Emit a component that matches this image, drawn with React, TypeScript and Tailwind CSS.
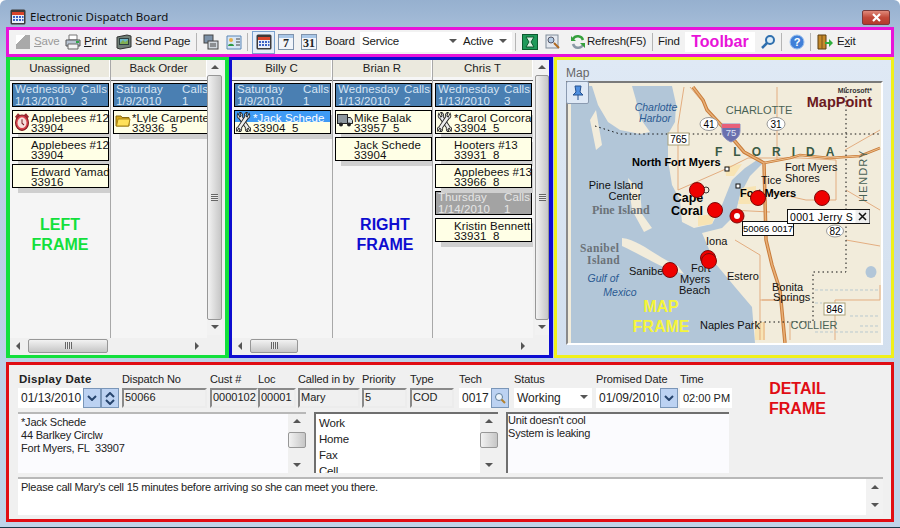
import type { ReactNode } from "react";

// Small hand drawn 16px icons used by the toolbar and the cards.
function Ico({ children, w = 16, h = 16, className = "" }: { children: ReactNode; w?: number; h?: number; className?: string }) {
  return (
    <svg width={w} height={h} viewBox="0 0 16 16" preserveAspectRatio="none" className={`shrink-0 ${className}`}>
      {children}
    </svg>
  );
}

const CalendarIcon = () => (
  <Ico>
    <rect x="0.5" y="0.5" width="15" height="15" rx="1.5" fill="#3d3a3a" />
    <rect x="2" y="3" width="12" height="3" fill="#d9442a" />
    <rect x="2" y="6" width="12" height="8" fill="#e9eef8" />
    <path d="M3 7h2v2H3zM6 7h2v2H6zM9 7h2v2H9zM12 7h1.500v2H12zM3 10h2v2H3zM6 10h2v2H6zM9 10h2v2H9zM12 10h1.500v2H12z" fill="#3d62c4" />
  </Ico>
);

const DayIcon = ({ label }: { label: string }) => (
  <span className="flex h-[16px] w-[16px] shrink-0 items-center justify-center border border-[#7f93ad] bg-[linear-gradient(#a9c7e8_0_3px,#f2f5fa_3px)] pt-[2px] font-['Liberation_Serif',serif] text-[12px] font-bold leading-none tracking-normal text-[#222]">
    {label}
  </span>
);

const PrintIcon = () => (
  <Ico>
    <path d="M4 1h8v5H4z" fill="#fff" stroke="#777" />
    <path d="M1 6h14v6H1z" fill="#b9c4d2" stroke="#555" />
    <path d="M3 10h10v5H3z" fill="#f4f4f4" stroke="#666" />
    <rect x="11" y="7" width="3" height="2" fill="#2fa84a" />
  </Ico>
);

const SendIcon = () => (
  <Ico>
    <path d="M1 3l10-2 4 1v11l-11 2-3-1z" fill="#6f7f76" stroke="#333" />
    <rect x="3.500" y="4.500" width="9" height="6" fill="#6cb7c9" stroke="#2d3f3f" />
    <path d="M4 9l3-3 2 2 3-2v4H4z" fill="#7fae52" />
  </Ico>
);

const WrenchIcon = () => (
  <Ico w={15} h={20}>
    <g fill="#ececec" stroke="#222" strokeWidth="0.9">
      <path d="M2 1L4 4 5.500 3 4 .5C6 0 7.500 2 7 4L14 12C15.500 12 16 14 15 15.500L13 13 11.500 14 13 15.700C11 16 9.500 15 10 12.500L3 5C1.500 5 .5 3 2 1Z" />
      <path d="M14 1L12 4 10.500 3 12 .5C10 0 8.500 2 9 4L2 12C.5 12 0 14 1 15.500L3 13 4.500 14 3 15.700C5 16 6.500 15 6 12.500L13 5C14.500 5 15.500 3 14 1Z" />
    </g>
  </Ico>
);

const TruckIcon = () => (
  <Ico>
    <rect x="0.500" y="2.500" width="10" height="9" fill="#8d979e" stroke="#222" />
    <path d="M10.500 5.500h3l2 3v3h-5z" fill="#c9d3d9" stroke="#222" />
    <circle cx="4" cy="12.500" r="2" fill="#222" />
    <circle cx="12" cy="12.500" r="2" fill="#222" />
  </Ico>
);

const FolderIcon = () => (
  <Ico>
    <path d="M1 4h5l1 1.500h7V14H1z" fill="#d9a91a" stroke="#8a6a10" />
    <path d="M1.500 14L3 7h12l-1.500 7z" fill="#ffe15a" stroke="#a98512" />
  </Ico>
);

const AlarmIcon = () => (
  <Ico h={19}>
    <circle cx="8" cy="9" r="6.500" fill="#d8404a" stroke="#7a1c22" />
    <circle cx="8" cy="9" r="4.500" fill="#f6dfdc" />
    <path d="M8 6v3.500l2 1.500" stroke="#7a1c22" fill="none" />
    <path d="M1 4l3-3 2 1.500-3.500 3zM15 4l-3-3-2 1.500 3.500 3z" fill="#9b2a30" />
  </Ico>
);

const Arrow = ({ dir }: { dir: "up" | "down" | "left" | "right" }) => {
  const d = { up: "M0 5L4 1 8 5z", down: "M0 1L8 1 4 5z", left: "M5 0L1 4 5 8z", right: "M1 0L5 4 1 8z" }[dir];
  return (
    <svg width="8" height="8" viewBox="0 0 8 8" className="shrink-0">
      <path d={d} fill="#555" />
    </svg>
  );
};

// Scrollbars, classic Windows look
function VScroll({ thumbTop = 0, thumbHeight, className = "" }: { thumbTop?: number; thumbHeight?: number; className?: string }) {
  return (
    <div className={`flex w-[15px] shrink-0 flex-col items-center bg-[#f2f2f2] ${className}`}>
      <div className="flex h-[15px] shrink-0 items-center justify-center"><Arrow dir="up" /></div>
      <div className="flex min-h-0 w-full flex-1 flex-col">
        <div style={{ height: thumbTop }} className="shrink-0" />
        <div
          style={thumbHeight ? { height: thumbHeight } : undefined}
          className={`flex items-center justify-center rounded-[2px] border border-[#979797] bg-[linear-gradient(90deg,#f2f2f2,#dcdcdc_50%,#c6c6c6)] ${thumbHeight ? "" : "flex-1"}`}
        >
          {!thumbHeight && <div className="h-[7px] w-[7px] bg-[repeating-linear-gradient(#666_0_1px,#e8e8e8_1px_2px)]" />}
        </div>
        {thumbHeight && <div className="flex-1" />}
      </div>
      <div className="flex h-[15px] shrink-0 items-center justify-center"><Arrow dir="down" /></div>
    </div>
  );
}

function HScroll({ width, thumb }: { width: number; thumb: number }) {
  return (
    <div style={{ width }} className="mb-[2px] flex h-[15px] shrink-0 items-center bg-[#f0f0f0]">
      <div className="flex w-[18px] shrink-0 justify-center"><Arrow dir="left" /></div>
      <div style={{ width: thumb }} className="flex h-[14px] shrink-0 items-center justify-center rounded-[2px] border border-[#979797] bg-[linear-gradient(#f2f2f2,#dcdcdc_50%,#c6c6c6)]">
        <div className="h-[7px] w-[7px] bg-[repeating-linear-gradient(90deg,#666_0_1px,#e8e8e8_1px_2px)]" />
      </div>
      <div className="flex-1" />
      <div className="flex w-[18px] shrink-0 justify-center"><Arrow dir="right" /></div>
    </div>
  );
}

// Board data
type Card = { kind: "card"; name: string; sub: string; icon?: ReactNode; selected?: boolean };
type Day = { kind: "day"; day: string; date: string; calls: string; grey?: boolean; label?: string };
type Entry = Card | Day;

function DayHead({ e }: { e: Day }) {
  return (
    <div className={`mb-[3px] grid h-[24px] w-[97px] shrink-0 grid-cols-[66px_60px] overflow-hidden border border-black pl-[2px] text-[11.500px] leading-[11.500px] tracking-[0.1px] ${e.grey ? "bg-[#a3a3a3] text-[#e6e6e6]" : "bg-[#4a7fb2] text-[#d6e4f2]"}`}>
      <span>{e.day}</span>
      <span>{e.label ?? "Calls:"}</span>
      <span>{e.date}</span>
      <span>{e.calls}</span>
    </div>
  );
}

function CardBox({ e }: { e: Card }) {
  return (
    <div className="relative mb-[3px] h-[24px] w-[97px] shrink-0 border border-black bg-[#ffffe6] text-[11.500px] leading-[10px] tracking-[0.1px] text-[#111] shadow-[6px_5px_0_#cfcfcf]">
      {e.selected && <div className="absolute inset-x-0 top-0 h-[11px] bg-[#3f9bf5]" />}
      <div className={`relative overflow-hidden whitespace-pre pl-[18px] pt-[2px] ${e.selected ? "text-white" : ""}`}>{e.name}</div>
      <div className="relative overflow-hidden whitespace-pre pl-[18px]">{e.sub}</div>
      {e.icon && <div className="absolute left-[1px] top-[1px]">{e.icon}</div>}
    </div>
  );
}

function Column({ title, width, entries, last }: { title: string; width: number; entries: Entry[]; last?: boolean }) {
  return (
    <div style={{ width }} className={`flex shrink-0 flex-col overflow-hidden ${last ? "" : "border-r border-[#a8a8a8]"}`}>
      <div className="flex h-[17px] shrink-0 items-center justify-center border-r border-white bg-[#ebe9de] text-[11.500px] text-[#222]">{title}</div>
      <div className="h-[3px] shrink-0 bg-[#f6f6f6]" />
      <div className="h-[1px] shrink-0 bg-[#555]" />
      <div className="flex flex-1 flex-col pl-[2px] pt-[2px]">
        {entries.map((e, i) => (e.kind === "day" ? <DayHead key={i} e={e} /> : <CardBox key={i} e={e} />))}
      </div>
    </div>
  );
}

const wrench = <WrenchIcon />;

function Sep({ ml = 5, mr = 5 }: { ml?: number; mr?: number }) {
  return <span style={{ marginLeft: ml, marginRight: mr }} className="h-[18px] w-px shrink-0 bg-[#b5b5b5]" />;
}

function Toolbar() {
  return (
    <div className="flex h-[30px] shrink-0 items-center border-[3px] border-[#e813d9] bg-[#f2f2f2] pl-[7px] text-[11.500px] tracking-[-0.2px] text-[#1a1a1a]">
      <span className="h-[14px] w-[14px] shrink-0 bg-[linear-gradient(135deg,#fff_0_35%,#a9a9a9_35%)]" />
      <span className="ml-[4px] w-[31px] shrink-0 text-[#9a9a9a]"><u>S</u>ave</span>
      <PrintIcon />
      <span className="ml-[3px] w-[32px] shrink-0"><u>P</u>rint</span>
      <SendIcon />
      <span className="ml-[3px] w-[56px] shrink-0">Send Page</span>
      <Sep mr={6} />
      <span className="flex shrink-0 gap-[7px]">
        <Ico><rect x="1" y="1" width="9" height="8" fill="#7d92a8" stroke="#444" /><rect x="5" y="7" width="10" height="8" fill="#d2d8de" stroke="#444" /><path d="M7 10h6M7 12h6" stroke="#444" /></Ico>
        <Ico><path d="M1 2h14v13H1z" fill="#d8e6f5" stroke="#5a86b6" /><circle cx="5" cy="6" r="2" fill="#e8b048" /><path d="M2 12c0-3 6-3 6 0z" fill="#2f9a48" /><path d="M10 5h4M10 8h4M10 11h4" stroke="#444" /></Ico>
      </span>
      <Sep mr={4} />
      <span className="flex h-[23px] w-[23px] shrink-0 items-center justify-center border border-[#7ba2cf] bg-[#e4eefa]"><CalendarIcon /></span>
      <span className="ml-[3px]"><DayIcon label="7" /></span>
      <span className="ml-[7px]"><DayIcon label="31" /></span>
      <span className="ml-[8px] w-[35px] shrink-0">Board</span>
      <span className="flex h-[20px] w-[100px] shrink-0 items-center justify-between bg-white pl-[2px] pr-[3px]">
        Service
        <Arrow dir="down" />
      </span>
      <span className="flex h-[20px] w-[52px] shrink-0 items-center justify-between bg-white pl-[3px] pr-[5px]">
        Active
        <Arrow dir="down" />
      </span>
      <Sep ml={3} mr={6} />
      <span className="flex shrink-0 gap-[7px]">
        <Ico><rect x="0.500" y="0.500" width="15" height="15" fill="#1f9a5a" stroke="#0d5a30" /><path d="M4 3h8l-3 5 3 5H4l3-5z" fill="#d8f0e0" stroke="#0d5a30" /></Ico>
        <Ico><rect x="1" y="1" width="12" height="13" fill="#e4e8ee" stroke="#7f8b99" /><circle cx="6" cy="6" r="3" fill="#b4cde6" stroke="#556" /><path d="M9 9l5 5" stroke="#b06a20" strokeWidth="2" /></Ico>
      </span>
      <span className="ml-[9px] shrink-0">
        <Ico><path d="M13 6A5.500 5.500 0 0 0 3 5" fill="none" stroke="#35a03c" strokeWidth="2.500" /><path d="M3 10a5.500 5.500 0 0 0 10 1" fill="none" stroke="#8a9aa6" strokeWidth="2.500" /><path d="M1 2v5h5zM15 14V9h-5z" fill="#35a03c" /></Ico>
      </span>
      <span className="ml-[1px] w-[60px] shrink-0">Refresh(F5)</span>
      <Sep />
      <span className="w-[27px] shrink-0">Find</span>
      <span className="flex h-[20px] w-[70px] shrink-0 items-center justify-center bg-white text-[16px] font-bold tracking-normal text-[#e813d9]">Toolbar</span>
      <span className="ml-[5px] shrink-0">
        <Ico><circle cx="10" cy="6" r="4" fill="#dcecf8" stroke="#2f6fae" strokeWidth="2" /><path d="M7 9l-5 5" stroke="#2f6fae" strokeWidth="2.500" /></Ico>
      </span>
      <Sep mr={7} />
      <span className="shrink-0">
        <Ico><circle cx="8" cy="8" r="7" fill="#3f7fd8" stroke="#9cc0ee" /><text x="8" y="12" textAnchor="middle" fontSize="11" fontWeight="bold" fill="#fff" fontFamily="Liberation Sans, sans-serif">?</text></Ico>
      </span>
      <Sep mr={6} />
      <span className="shrink-0">
        <Ico><path d="M1 1h8v14H1z" fill="#c58a2c" stroke="#5d3e10" /><path d="M5 1v14" stroke="#7a5418" /><path d="M8 8h4V5l4 4-4 4v-3H8z" fill="#2fae3c" /></Ico>
      </span>
      <span className="ml-[4px] shrink-0">E<u>x</u>it</span>
    </div>
  );
}

function MapPin({ x, y }: { x: number; y: number }) {
  return <circle cx={x} cy={y} r="7.500" fill="#ef0000" stroke="#7c0a0a" strokeWidth="1" />;
}

// The map is a picture, so the whole thing is one svg in page coordinates.
function MapDrawing() {
  const sans = "Liberation Sans, sans-serif";
  const serif = "Liberation Serif, serif";
  return (
    <svg width="313" height="260" viewBox="568 83 313 260" className="block" fontFamily={sans}>
      <rect x="568" y="83" width="313" height="260" fill="#f2ecdb" />
      <path
        d="M571 86L592 86 598 105 608 122 620 130 640 134 650 132 640 118 636 100 632 86 672 86 676 104 675 122 668 134 668 160 672 185 680 200 682 222 694 228 712 224 722 205 732 180 745 168 760 158 764 162 750 176 740 195 735 215 722 228 702 233 715 263 735 287 752 307 755 343 571 343Z"
        fill="#b2c6d8"
      />
      <path d="M622 238C640 240 655 256 678 266L684 274C660 268 640 254 622 246Z M628 178L640 190 642 214 652 228 644 232 632 210Z M596 110L602 145 596 150 590 120Z" fill="#f2ecdb" />
      <path d="M698 216L715 214 712 224 698 226Z M725 166L742 164 734 176 726 176Z M742 188L756 186 756 204 738 204Z M755 322L765 322 765 340 755 340Z" fill="#f8e4b4" />
      <g fill="none" stroke="#e3ad80" strokeWidth="1">
        <path d="M684 87L678 125 678 190M678 190L728 168 748 158M748 158L800 158 836 160 836 200 806 200 770 192M777 87L777 130 777 160M690 87L730 135M762 300H790M764 340V322M790 322V340M845 150L880 130M735 240L760 255 760 340M760 300L800 300M835 300L880 300 880 285M835 340L835 300M730 210L770 212M846 190L880 210 M846 240L880 246" />
      </g>
      <path d="M693 87L703 100 707 110 722 126 744 152 764 163 765 200 766 240 772 265 780 290 785 343" fill="none" stroke="#c97c3a" strokeWidth="3.500" />
      <path d="M693 87L703 100 707 110 722 126 744 152 764 163 765 200 766 240 772 265 780 290 785 343" fill="none" stroke="#e8b078" strokeWidth="1.500" />
      <path d="M764 163L790 158 800 155 830 158 860 156 880 148" fill="none" stroke="#c97c3a" strokeWidth="2.500" />
      <path d="M764 163L790 158 800 155 830 158 860 156 880 148" fill="none" stroke="#efc08c" strokeWidth="1" />
      <path d="M595 126L620 134 880 134M846 87V272H813V322H752" fill="none" stroke="#111" strokeWidth="1" strokeDasharray="1.500 3" />
      <ellipse cx="871" cy="272" rx="5.500" ry="6" fill="#b2c6d8" />
      <g stroke="#b9c9cf" strokeDasharray="3 2">
        <path d="M815 290H880M815 303H822M850 316H880M815 332H880M860 326H880" />
      </g>

      <g fontStyle="italic" fontSize="10.500" fill="#2a5a92">
        <text x="656" y="111" textAnchor="middle">Charlotte</text>
        <text x="655" y="122" textAnchor="middle">Harbor</text>
        <text x="603" y="282" textAnchor="middle">Gulf of</text>
        <text x="620" y="296" textAnchor="middle">Mexico</text>
      </g>
      <text x="759" y="114" textAnchor="middle" fontSize="11" fill="#4a6255">CHARLOTTE</text>
      <text x="715" y="156" fontSize="12" fontWeight="bold" fill="#3b5a44" letterSpacing="11">FLORIDA</text>
      <text x="814" y="329" fontSize="11" fill="#4a6255" textAnchor="middle">COLLIER</text>
      <text transform="translate(867 202) rotate(-90)" fontSize="11" fill="#4a6255" letterSpacing="1">HENDRY</text>

      <g fontSize="11" fontWeight="bold" fill="#000">
        <text x="632" y="166">North Fort Myers</text>
        <text x="688" y="202" textAnchor="middle" fontSize="12.500">Cape</text>
        <text x="687" y="215" textAnchor="middle" fontSize="12.500">Coral</text>
        <text x="740" y="197">Fort Myers</text>
      </g>
      <g fontSize="11" fill="#111">
        <text x="616" y="189" textAnchor="middle">Pine Island</text>
        <text x="625" y="200" textAnchor="middle">Center</text>
        <text x="785" y="171">Fort Myers</text>
        <text x="785" y="182">Shores</text>
        <text x="761" y="184">Tice</text>
        <text x="706" y="245">Iona</text>
        <text x="629" y="275">Sanibel</text>
        <text x="691" y="272">Fort</text>
        <text x="680" y="283">Myers</text>
        <text x="679" y="294">Beach</text>
        <text x="727" y="280">Estero</text>
        <text x="772" y="291">Bonita</text>
        <text x="773" y="301">Springs</text>
        <text x="700" y="329">Naples Park</text>
      </g>
      <g fontFamily={serif} fontWeight="bold" fill="#6b7278">
        <text x="592" y="214" fontSize="12">Pine Island</text>
        <text x="580" y="252" fontSize="11.500" letterSpacing=".4">Sanibel</text>
        <text x="587" y="264" fontSize="11.500" letterSpacing=".4">Island</text>
      </g>
      <g fontSize="16" fontWeight="bold" fill="#f5f53a">
        <text x="661" y="312" textAnchor="middle">MAP</text>
        <text x="661" y="332" textAnchor="middle">FRAME</text>
      </g>

      <text x="872" y="93" textAnchor="end" fontSize="7" fontWeight="bold" fill="#333">Microsoft*</text>
      <text x="872" y="107" textAnchor="end" fontSize="14.500" fontWeight="bold" fill="#6b1a1e">MapPoint</text>

      {/* road shields */}
      <ellipse cx="709" cy="124" rx="9" ry="6.500" fill="#fff" stroke="#999" />
      <text x="709" y="128" textAnchor="middle" fontSize="10">41</text>
      <ellipse cx="776" cy="124" rx="9" ry="6.500" fill="#fff" stroke="#999" />
      <text x="776" y="128" textAnchor="middle" fontSize="10">31</text>
      <path d="M722 124H740V131C740 138 733 141 731 142 729 141 722 138 722 131Z" fill="#6a70ae" stroke="#8a90c0" />
      <rect x="722" y="124" width="18" height="4" fill="#e8607a" />
      <text x="731" y="136" textAnchor="middle" fontSize="9.500" fill="#dfe3f5">75</text>
      <rect x="668" y="133" width="21" height="12" fill="#fff" stroke="#a8a078" />
      <text x="678.500" y="143" textAnchor="middle" fontSize="10">765</text>
      <ellipse cx="835" cy="231" rx="8.500" ry="6" fill="#fff" stroke="#999" />
      <text x="835" y="235" textAnchor="middle" fontSize="10">82</text>
      <rect x="824" y="303" width="21" height="12" fill="#fff" stroke="#a8a078" />
      <text x="834.500" y="313" textAnchor="middle" fontSize="10">846</text>

      <rect x="725" y="167" width="4" height="4" fill="#fff" stroke="#111" />
      <rect x="736" y="184" width="4" height="4" fill="#fff" stroke="#111" />
      <circle cx="706" cy="190" r="3" fill="none" stroke="#333" />

      <MapPin x={697} y={190} />
      <MapPin x={715} y={210} />
      <MapPin x={758} y={198} />
      <MapPin x={822} y={198} />
      <MapPin x={708} y={258} />
      <MapPin x={709} y={261} />
      <MapPin x={670} y={270} />
      <circle cx="737" cy="216" r="7" fill="#e00000" stroke="#7c0a0a" />
      <circle cx="737" cy="216" r="3" fill="#fff" />

      <rect x="742.500" y="221.500" width="51" height="14" fill="#fff" stroke="#111" />
      <text x="768" y="232" textAnchor="middle" fontSize="9.500">50066 0017</text>
      <rect x="787.500" y="209.500" width="82" height="14" fill="#fff" stroke="#111" />
      <text x="790" y="221" fontSize="10.500" letterSpacing=".3">0001 Jerry S</text>
      <rect x="855.500" y="210" width="14" height="13" fill="#efefef" />
      <path d="M859 213l7 7M866 213l-7 7" stroke="#111" strokeWidth="1.500" />
    </svg>
  );
}

function Field({ label, w, value, bold, children, ml = 0 }: { label: string; w: number; value?: string; bold?: boolean; children?: ReactNode; ml?: number }) {
  return (
    <div style={{ width: w, marginLeft: ml }} className="flex shrink-0 flex-col">
      <div className={`h-[18px] pt-[2px] leading-[14px] ${bold ? "pl-[1px] text-[11.500px] font-bold tracking-[0.3px]" : "tracking-[-0.1px]"}`}>{label}</div>
      {children ?? (
        <div className="h-[20px] overflow-hidden border-2 border-b-[#ececec] border-l-[#8a8a8a] border-r-[#ececec] border-t-[#8a8a8a] bg-[#f0f0f0] pl-[1px] leading-[14px]">{value}</div>
      )}
    </div>
  );
}

const DropBtn = ({ children }: { children: ReactNode }) => (
  <span className="flex h-[20px] w-[18px] shrink-0 items-center justify-center border border-[#7a96b8] bg-[#bcd2f2]">{children}</span>
);

const Chevron = ({ up }: { up?: boolean }) => (
  <svg width="10" height="6" viewBox="0 0 10 6" className="block">
    <path d={up ? "M1 5l4-4 4 4" : "M1 1l4 4 4-4"} fill="none" stroke="#27456e" strokeWidth="2" />
  </svg>
);

function Detail() {
  return (
    <div className="relative mt-[4px] flex h-[160px] shrink-0 flex-col border-[3px] border-[#e00d14] bg-[#f0f0f0] pl-[9px] pt-[5px] text-[11px] text-[#222]">
      <div className="flex">
        <Field label="Display Date" w={103} bold>
          <div className="flex h-[20px]">
            <span className="h-[20px] w-[65px] bg-white pl-[3px] text-[12px] leading-[20px]">01/13/2010</span>
            <DropBtn><Chevron /></DropBtn>
            <DropBtn><span className="flex flex-col gap-[1px]"><Chevron up /><Chevron /></span></DropBtn>
          </div>
        </Field>
        <Field label="Dispatch No" w={85} value="50066" ml={1} />
        <Field label="Cust #" w={48} value="0000102" ml={3} />
        <Field label="Loc" w={38} value="00001" />
        <Field label="Called in by" w={62} value="Mary" ml={2} />
        <Field label="Priority" w={45} value="5" ml={2} />
        <Field label="Type" w={44} value="COD" ml={3} />
        <Field label="Tech" w={50} ml={5}>
          <div className="flex h-[20px]">
            <span className="w-[32px] bg-white pl-[3px] text-[12px] leading-[20px]">0017</span>
            <span className="flex h-[20px] w-[18px] items-center justify-center border border-[#7a96b8] bg-[#bcd2f2]">
              <svg width="12" height="12" viewBox="0 0 12 12"><circle cx="5" cy="5" r="3.500" fill="#eef5fb" stroke="#5f7f9e" /><path d="M7.500 7.500l3.500 3.500" stroke="#b3812e" strokeWidth="2" /></svg>
            </span>
          </div>
        </Field>
        <Field label="Status" w={78} ml={5}>
          <span className="flex h-[20px] items-center justify-between bg-white pl-[3px] pr-[4px] text-[12px]">Working<Arrow dir="down" /></span>
        </Field>
        <Field label="Promised Date" w={82} ml={4}>
          <div className="flex h-[20px]">
            <span className="w-[64px] bg-white pl-[3px] text-[12px] leading-[20px]">01/09/2010</span>
            <DropBtn><Chevron /></DropBtn>
          </div>
        </Field>
        <Field label="Time" w={52} ml={2}>
          <span className="h-[20px] bg-white pl-[3px] text-[11px] leading-[20px]">02:00 PM</span>
        </Field>
      </div>

      <div className="mt-[4px] flex h-[61px] tracking-[-0.2px]">
        <div className="flex w-[288px] border-t-2 border-[#b8b8b8] bg-[#fbfbfe]">
          <div className="flex-1 whitespace-pre pl-[3px] pt-[2px] leading-[13px]">{"*Jack Schede\n44 Barlkey Circlw\nFort Myers, FL  33907"}</div>
          <VScroll thumbTop={3} thumbHeight={16} className="!w-[18px] !bg-[#f0f0f0]" />
        </div>
        <div className="ml-[8px] flex w-[184px] border-l-2 border-t-2 border-[#6f6f6f] bg-white">
          <div className="flex-1 overflow-hidden pl-[3px] pt-[1px] text-[11.500px] leading-[16px]">
            <div>Work</div>
            <div>Home</div>
            <div>Fax</div>
            <div>Cell</div>
          </div>
          <VScroll thumbTop={3} thumbHeight={16} className="!w-[18px] !bg-[#f0f0f0]" />
        </div>
        <div className="ml-[8px] w-[223px] whitespace-pre border-l-2 border-t-2 border-[#6f6f6f] bg-[#fbfbfe] leading-[13px]">
          {"Unit doesn't cool\nSystem is leaking"}
        </div>
      </div>

      <div className="mt-[4px] flex h-[38px] w-[865px] border-t-2 border-[#b8b8b8] bg-white">
        <div className="flex-1 pl-[3px] pt-[2px] leading-[13px] tracking-[-0.22px]">Please call Mary's cell 15 minutes before arriving so she can meet you there.</div>
        <div className="flex w-[17px] flex-col items-center justify-around bg-[#f2f2f2]">
          <Arrow dir="up" />
          <Arrow dir="down" />
        </div>
      </div>

      <div className="absolute left-[760px] top-[14px] text-center text-[16px] font-bold leading-[20px] text-[#e00d14]">
        DETAIL
        <br />
        FRAME
      </div>
    </div>
  );
}

export default function App() {
  return (
    <div className="relative flex h-[528px] w-[900px] flex-col overflow-hidden whitespace-nowrap rounded-t-[6px] border-b border-[#1b3a4a] bg-[linear-gradient(#96b0cf,#b7cce3_60px,#c0d4e9)] font-['Liberation_Sans',sans-serif] text-[12px]">
      <div className="flex h-[27px] shrink-0 items-center justify-between px-[10px] pt-[7px]">
        <div className="flex items-center gap-[4px]">
          <CalendarIcon />
          <span className="font-['Noto_Sans',sans-serif] text-[11.500px] text-[#111]">Electronic Dispatch Board</span>
        </div>
        <span className="flex h-[15px] w-[28px] items-center justify-center rounded-[2px] border border-[#7a3a3a] bg-[linear-gradient(#e0897a,#c24a3a_50%,#b33a2c)]">
          <svg width="11" height="9" viewBox="0 0 11 9"><path d="M2 1l7 7M9 1L2 8" stroke="#fff" strokeWidth="2.200" /></svg>
        </span>
      </div>

      <div className="flex min-h-0 flex-col px-[6px]">
        <Toolbar />
        <div className="flex h-[301px] shrink-0">
          <div className="relative flex w-[223px] shrink-0 flex-col border-x-[4px] border-y-[3px] border-[#12e03c] bg-[#f0f0f0]">
            <div className="flex min-h-0 flex-1">
              <div className="flex w-[197px] shrink-0 bg-[#f5f5f5]">
                <Column
                  title="Unassigned"
                  width={101}
                  entries={[
                    { kind: "day", day: "Wednesday", date: "1/13/2010", calls: "3" },
                    { kind: "card", name: "Applebees #12", sub: "33904", icon: <AlarmIcon /> },
                    { kind: "card", name: "Applebees #12", sub: "33904" },
                    { kind: "card", name: "Edward Yamad", sub: "33916" },
                  ]}
                />
                <Column
                  title="Back Order"
                  width={96}
                  last
                  entries={[
                    { kind: "day", day: "Saturday", date: "1/9/2010", calls: "1", label: "Calls" },
                    { kind: "card", name: "*Lyle Carpenter", sub: "33936  5", icon: <FolderIcon /> },
                  ]}
                />
              </div>
              <VScroll className="mb-[3px]" />
            </div>
            <HScroll width={197} thumb={80} />
            <div className="absolute left-[20px] top-[155px] w-[60px] text-center text-[16px] font-bold leading-[20px] text-[#12e03c]">
              LEFT
              <br />
              FRAME
            </div>
          </div>

          <div className="relative flex w-[324px] shrink-0 flex-col border-y-[3px] border-l-[3px] border-r-[4px] border-[#0d0dd0] bg-[#f0f0f0]">
            <div className="flex min-h-0 flex-1">
              <div className="flex w-[301px] shrink-0 bg-[#f5f5f5]">
                <Column
                  title="Billy C"
                  width={101}
                  entries={[
                    { kind: "day", day: "Saturday", date: "1/9/2010", calls: "1" },
                    { kind: "card", name: "*Jack Schede", sub: "33904  5", icon: wrench, selected: true },
                  ]}
                />
                <Column
                  title="Brian R"
                  width={100}
                  entries={[
                    { kind: "day", day: "Wednesday", date: "1/13/2010", calls: "2" },
                    { kind: "card", name: "Mike Balak", sub: "33957  5", icon: <TruckIcon /> },
                    { kind: "card", name: "Jack Schede", sub: "33904" },
                  ]}
                />
                <Column
                  title="Chris T"
                  width={100}
                  last
                  entries={[
                    { kind: "day", day: "Wednesday", date: "1/13/2010", calls: "3" },
                    { kind: "card", name: "*Carol Corcora", sub: "33904  5", icon: wrench },
                    { kind: "card", name: "Hooters #13", sub: "33931  8" },
                    { kind: "card", name: "Applebees #13", sub: "33966  8" },
                    { kind: "day", day: "Thursday", date: "1/14/2010", calls: "1", grey: true },
                    { kind: "card", name: "Kristin Bennett", sub: "33931  8" },
                  ]}
                />
              </div>
              <VScroll className="mb-[3px] ml-[2px] !w-[14px]" />
            </div>
            <HScroll width={301} thumb={48} />
            <div className="absolute left-[123px] top-[155px] w-[60px] text-center text-[16px] font-bold leading-[20px] text-[#0d0dd0]">
              RIGHT
              <br />
              FRAME
            </div>
          </div>

          <div className="ml-px flex min-w-0 flex-1 flex-col border-[3px] border-[#f0f01a] bg-[linear-gradient(#dfe9f5,#d2dfee)] pl-[9px] pr-[6px] pt-[5px]">
            <div className="h-[16px] text-[12px] leading-[16px] text-[#666]">Map</div>
            <div className="relative w-[317px] border-2 border-white border-l-[#8a8a8a] border-t-[#7a7a7a]">
              <MapDrawing />
              <span className="absolute -left-[2px] -top-[2px] flex h-[23px] w-[23px] items-center justify-center rounded-[2px] border border-[#8a9ab0] bg-[#dfe9f6]">
                <svg width="14" height="16" viewBox="0 0 14 16"><path d="M4 1h6l-1 6 3 3H2l3-3zM7 10v5" fill="#4f8fe0" stroke="#24508e" /></svg>
              </span>
            </div>
          </div>
        </div>
        <Detail />
      </div>
    </div>
  );
}
